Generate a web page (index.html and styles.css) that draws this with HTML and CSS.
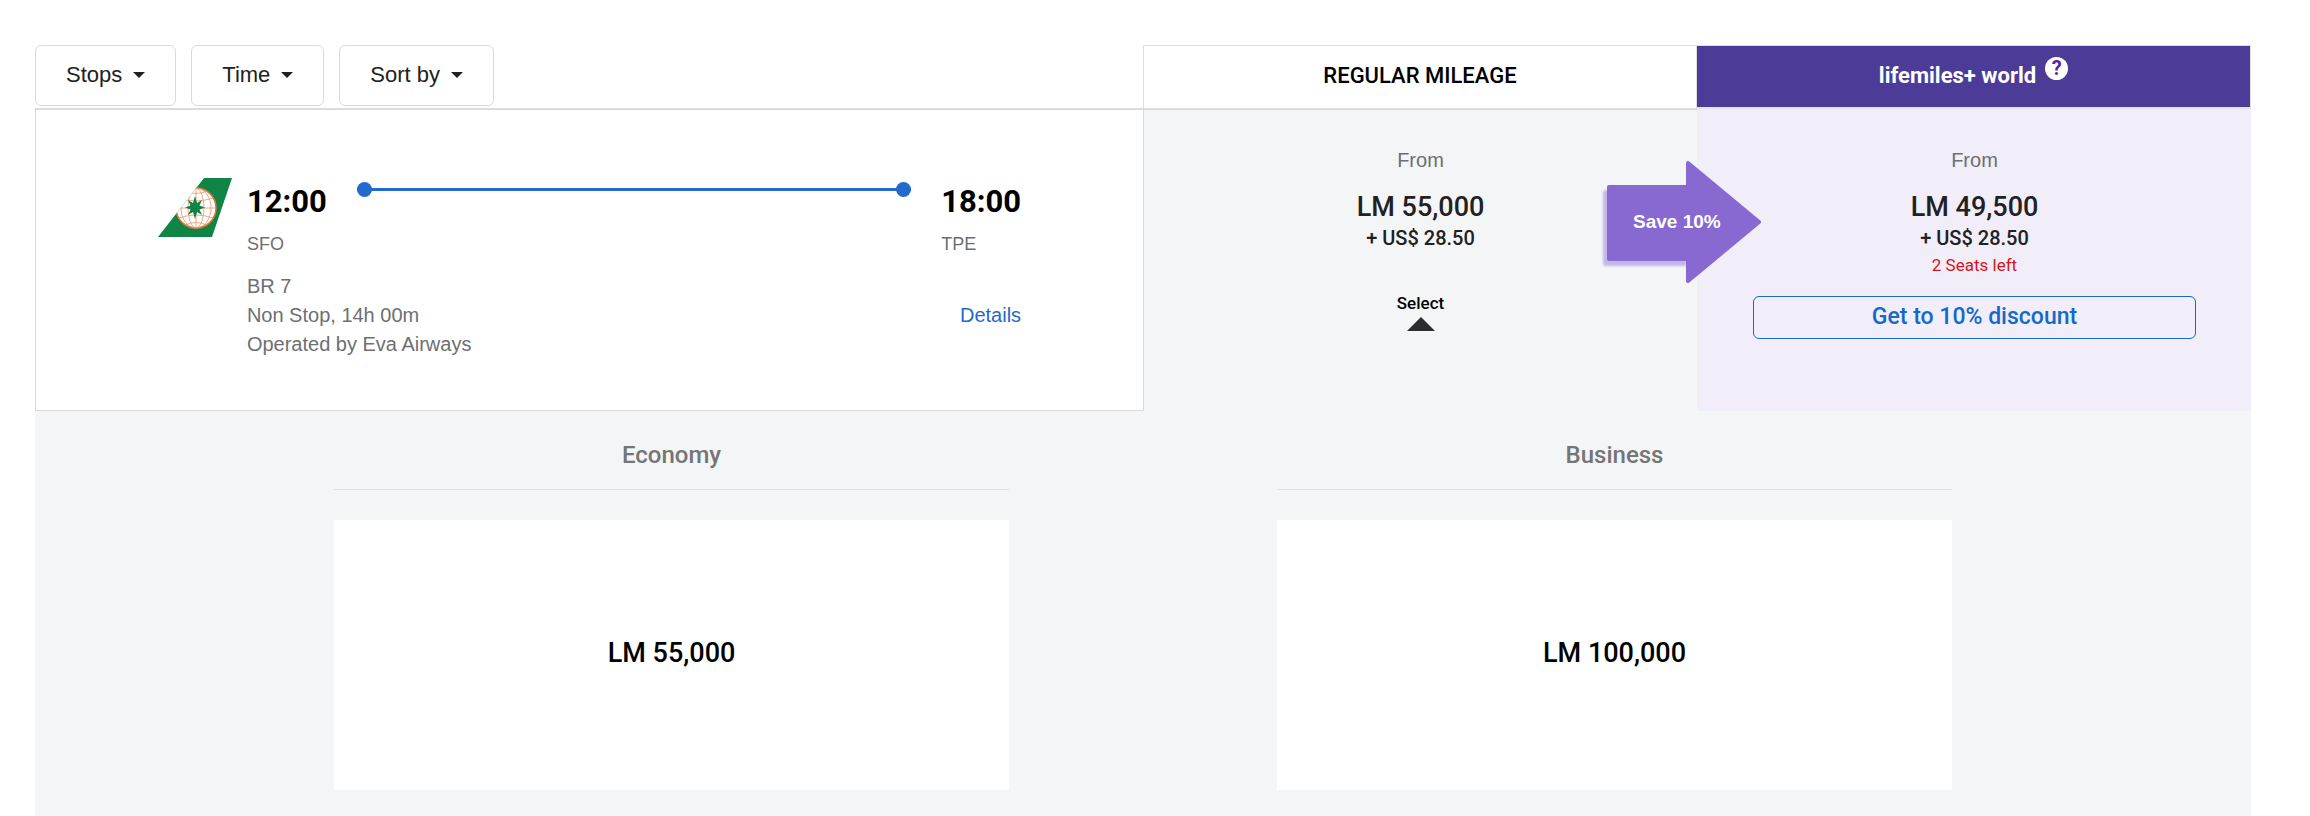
FILE: index.html
```html
<!DOCTYPE html>
<html lang="en">
<head>
    <meta charset="UTF-8">
    <meta name="viewport" content="width=device-width, initial-scale=1.0">
    <title>Flight Results</title>
    <link rel="stylesheet" href="styles.css">
</head>
<body>
    <div class="results">
        <div class="header">
            <div class="filters">
                <button type="button" class="filter">Stops <span class="caret"></span></button>
                <button type="button" class="filter">Time <span class="caret"></span></button>
                <button type="button" class="filter">Sort by <span class="caret"></span></button>
            </div>
            <div class="col-title">REGULAR MILEAGE</div>
            <div class="col-title col-title-plus">
                lifemiles+ world
                <button type="button" class="help" aria-label="Help">?</button>
            </div>
        </div>

        <div class="flight-row">
            <div class="flight">
                <!-- Airline tail -->
                <svg class="airline-logo" width="75" height="60" viewBox="0 0 75 60" role="img" aria-label="Eva Airways">
                    <defs>
                        <clipPath id="tail"><path d="M46 0H74L54 59H0Z"/></clipPath>
                    </defs>
                    <path d="M46 0H74L54 59H0Z" fill="#0f8445"/>
                    <g clip-path="url(#tail)">
                        <circle cx="38" cy="30" r="20" fill="#fff" stroke="#e8743b" stroke-width="1.5"/>
                        <g fill="none" stroke="#ee9468" stroke-width="0.8">
                            <ellipse cx="38" cy="30" rx="8" ry="20"/>
                            <ellipse cx="38" cy="30" rx="15" ry="20"/>
                            <path d="M38 10V50M18 30H58M21 20Q38 26 55 20M21 40Q38 34 55 40M27 13Q38 18 49 13M27 47Q38 42 49 47"/>
                        </g>
                    </g>
                    <path d="M37 18L39 25L44 22L41.500 27.500L47 29.500L41.500 31.500L44 37L39 34L37 41L35 34L30 37L32.500 31.500L27 29.500L32.500 27.500L30 22L35 25Z" fill="#0f8445"/>
                </svg>
                <div class="flight-body">
                    <div class="schedule">
                        <div class="stop">
                            <div class="time">12:00</div>
                            <div class="airport">SFO</div>
                        </div>
                        <div class="route"></div>
                        <div class="stop">
                            <div class="time">18:00</div>
                            <div class="airport">TPE</div>
                        </div>
                    </div>
                    <div class="flight-info">
                        <div>
                            <div>BR 7</div>
                            <div>Non Stop, 14h 00m</div>
                            <div>Operated by Eva Airways</div>
                        </div>
                        <a href="#" class="details">Details</a>
                    </div>
                </div>
            </div>

            <div class="price">
                <div class="from">From</div>
                <div class="miles">LM 55,000</div>
                <div class="tax">+ US$ 28.50</div>
                <button type="button" class="select">Select<span class="select-arrow"></span></button>
            </div>

            <div class="price price-plus">
                <div class="save">
                    <svg width="162" height="130" viewBox="0 0 162 130" aria-hidden="true">
                        <rect class="save-shadow" x="3" y="33" width="84" height="76" rx="3"/>
                        <path class="save-arrow" d="M9 30H88V6L159 65L88 124V102H9Z"/>
                    </svg>
                    <span class="save-label">Save 10%</span>
                </div>
                <div class="from">From</div>
                <div class="miles">LM 49,500</div>
                <div class="tax">+ US$ 28.50</div>
                <div class="seats">2 Seats left</div>
                <button type="button" class="discount">Get to 10% discount</button>
            </div>
        </div>

        <div class="cabins">
            <div class="cabin">
                <h2>Economy</h2>
                <div class="cabin-price">LM 55,000</div>
            </div>
            <div class="cabin">
                <h2>Business</h2>
                <div class="cabin-price">LM 100,000</div>
            </div>
        </div>
    </div>
</body>
</html>
```
FILE: styles.css
```css
* {
    box-sizing: border-box;
}
body {
    font-family: "Liberation Sans", Arial, sans-serif;
    font-size: 20px;
    color: #6c6f73;
    background-color: #fff;
    margin: 0;
}
button {
    font-family: inherit;
    cursor: pointer;
}
.results {
    display: flex;
    flex-direction: column;
    min-height: 100vh;
    padding: 45px 59px 0 35px;
}
.header,
.flight-row {
    display: grid;
    grid-template-columns: 2fr 1fr 1fr;
}

/* Filters and column titles */
.filters {
    display: flex;
    align-items: flex-start;
    gap: 15px;
    border-bottom: 1px solid #dedede;
}
.filter {
    display: flex;
    align-items: center;
    gap: 11px;
    height: 61px;
    padding: 0 30px 2px;
    font-size: 22px;
    color: #212121;
    background-color: #fff;
    border: 1px solid #dadada;
    border-radius: 6px;
}
.caret {
    border: 6px solid transparent;
    border-top-color: #212121;
    border-bottom: none;
}
.col-title {
    display: flex;
    align-items: center;
    justify-content: center;
    height: 64px;
    padding-bottom: 3px;
    font-family: Roboto, sans-serif;
    font-size: 22px;
    font-weight: 500;
    color: #000;
    border: 1px solid #dedede;
}
.col-title-plus {
    gap: 9px;
    font-weight: 700;
    color: #fff;
    background-color: #4d3c97;
    border-left: none;
    border-bottom: 2px solid #e6e2ea;
}
.help {
    align-self: flex-start;
    width: 23px;
    height: 23px;
    margin-top: 11px;
    padding: 0;
    font-family: Roboto, sans-serif;
    font-size: 20px;
    font-weight: 700;
    line-height: 23px;
    color: #5b1fa0;
    background-color: #fff;
    border: none;
    border-radius: 50%;
}

/* Flight */
.flight {
    display: flex;
    align-items: flex-start;
    gap: 14px;
    padding: 68px 11% 51px;
    border: 1px solid #dadada;
    border-right: none;
}
.airline-logo {
    flex: none;
}
.flight-body {
    flex: 1;
    padding-top: 4px;
}
.schedule {
    display: flex;
    justify-content: space-between;
    gap: 30px;
}
.time {
    font-family: Roboto, sans-serif;
    font-size: 31px;
    font-weight: 700;
    line-height: 40px;
    color: #000;
}
.airport {
    margin-top: 8px;
    font-size: 18px;
    line-height: 28px;
}
.route {
    position: relative;
    flex: 1;
    height: 3px;
    margin-top: 6px;
    background-color: #2469cd;
}
.route::before,
.route::after {
    content: "";
    position: absolute;
    top: -6px;
    width: 15px;
    height: 15px;
    background-color: #2469cd;
    border-radius: 50%;
}
.route::before {
    left: 0;
}
.route::after {
    right: 0;
}
.flight-info {
    display: flex;
    justify-content: space-between;
    align-items: center;
    margin-top: 14px;
    line-height: 29px;
}
.details {
    color: #2469cd;
    text-decoration: none;
}

/* Prices */
.price {
    position: relative;
    display: flex;
    flex-direction: column;
    align-items: center;
    padding-top: 36px;
    background-color: #f3f5f7;
    border-top: 1px solid #dadada;
    border-left: 1px solid #dadada;
}
.price-plus {
    background-color: #f1edf9;
    border-color: #f1edf9;
}
.from {
    line-height: 28px;
}
.miles,
.tax,
.select,
.discount {
    font-family: Roboto, sans-serif;
    font-weight: 500;
    color: #212121;
}
.miles {
    margin-top: 16px;
    font-size: 27px;
    line-height: 34px;
}
.tax {
    font-size: 20px;
    line-height: 28px;
}
.seats {
    font-family: Roboto, sans-serif;
    font-size: 17px;
    line-height: 26px;
    color: #d3151c;
}
.select {
    display: flex;
    flex-direction: column;
    align-items: center;
    gap: 2px;
    margin-top: 39px;
    padding: 0;
    font-size: 17px;
    line-height: 24px;
    color: #000;
    background: none;
    border: none;
}
.select-arrow {
    border: 14px solid transparent;
    border-top: none;
    border-bottom-color: #2d2d2d;
}
.discount {
    width: 80%;
    height: 43px;
    margin-top: 18px;
    padding: 0 0 3px;
    font-size: 23px;
    color: #1469c9;
    background: none;
    border: 1px solid #1469c9;
    border-radius: 6px;
}

/* Arrow lies over both price columns */
.save {
    position: absolute;
    top: 47px;
    left: -98px;
    display: flex;
    align-items: center;
}
.save-shadow {
    fill: #c4b6e7;
    filter: blur(1px);
}
.save-arrow {
    fill: #8868d1;
    stroke: #8868d1;
    stroke-width: 4px;
    stroke-linejoin: round;
}
.save-label {
    position: absolute;
    left: 33px;
    font-size: 19px;
    font-weight: 700;
    color: #fff;
}

/* Cabins */
.cabins {
    display: flex;
    flex: 1;
    gap: 268px;
    padding: 24px 299px 26px;
    background-color: #f3f5f7;
}
.cabin {
    flex: 1;
}
.cabin h2 {
    margin: 0 0 30px;
    padding-bottom: 13px;
    font-family: Roboto, sans-serif;
    font-size: 24px;
    font-weight: 500;
    line-height: 41px;
    text-align: center;
    color: #757575;
    border-bottom: 1px solid #e0e1e3;
}
.cabin-price {
    display: flex;
    align-items: center;
    justify-content: center;
    height: 270px;
    padding-bottom: 4px;
    font-family: Roboto, sans-serif;
    font-size: 27px;
    font-weight: 500;
    color: #000;
    background-color: #fff;
}
```
